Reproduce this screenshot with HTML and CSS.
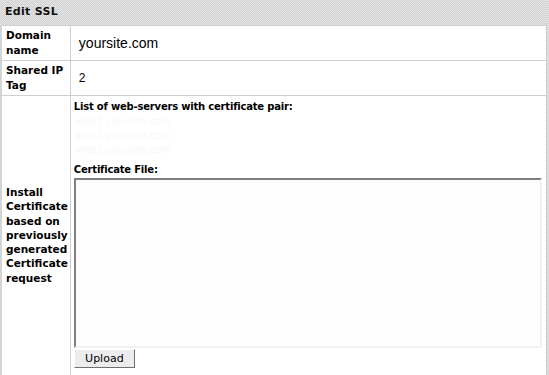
FILE: index.html
```html
<!DOCTYPE html>
<html lang="en">
<head>
    <meta charset="UTF-8">
    <title>Edit SSL</title>
    <link rel="stylesheet" href="styles.css">
</head>
<body>
    <div class="panel">
        <div class="panel-title">Edit SSL</div>
        <table class="ssl-table">
            <tr class="row-domain">
                <th>Domain name</th>
                <td><span class="domain">yoursite.com</span></td>
            </tr>
            <tr class="row-tag">
                <th>Shared IP Tag</th>
                <td>2</td>
            </tr>
            <tr class="row-install">
                <th>Install Certificate based on previously generated Certificate request</th>
                <td>
                    <div class="field-label">List of web-servers with certificate pair:</div>
                    <div class="server-list">
                        <div>web1.yoursite.com</div>
                        <div>web2.yoursite.com</div>
                        <div>web3.yoursite.com</div>
                    </div>
                    <div class="field-label">Certificate File:</div>
                    <textarea class="cert-file"></textarea>
                    <button type="button" class="upload">Upload</button>
                </td>
            </tr>
        </table>
    </div>
</body>
</html>
```
FILE: styles.css
```css
body {
    margin: 0;
    font-family: "DejaVu Sans", Verdana, sans-serif;
    font-size: 10px;
    color: #000;
    background-color: #dcdcdc;
    background-image: repeating-conic-gradient(#d2d2d2 0 25%, #e4e4e4 0 50%);
    background-size: 2px 2px;
    overflow: hidden;
}
.panel {
    width: 546px;
}
.panel-title {
    height: 25px;
    line-height: 24px;
    padding-left: 5px;
    font-weight: bold;
    font-size: 11px;
    letter-spacing: 0.3px;
    color: #111;
}
.ssl-table {
    width: 546px;
    border-collapse: collapse;
    background: #fff;
    border-left: 2px solid #d4d4d4;
    border-right: 1px solid #a8a8a8;
}
.ssl-table th,
.ssl-table td {
    border: 1px solid #cfcfcf;
    padding: 0;
}
.ssl-table th {
    width: 62px;
    padding: 0 2px 0 4px;
    text-align: left;
    font-weight: bold;
    font-size: 10.5px;
    line-height: 15px;
    letter-spacing: 0;
}
.ssl-table td {
    padding-left: 8px;
    font-family: "Liberation Sans", Arial, sans-serif;
    font-size: 12px;
}
.row-domain {
    height: 35px;
}
.row-tag {
    height: 35px;
}
.domain {
    font-size: 14px;
}
.row-install td {
    padding: 5px 4px 0 3px;
    vertical-align: top;
    font-family: "DejaVu Sans", Verdana, sans-serif;
    font-size: 10px;
}
.row-install th {
    vertical-align: top;
    padding-top: 89px;
    line-height: 14.3px;
}
.field-label {
    font-weight: bold;
    letter-spacing: -0.2px;
    height: 14px;
}
.server-list {
    color: #f8f8f8;
    line-height: 14px;
    padding: 0 2px 7px;
}
.cert-file {
    display: block;
    width: 468px;
    height: 170px;
    margin: 0;
    box-sizing: border-box;
    border: 2px solid;
    border-color: #808080 #f2f2f2 #f2f2f2 #808080;
    background: #fdfdfd;
    resize: none;
}
.upload {
    display: block;
    margin: 1px 0 8px;
    width: 61px;
    height: 19px;
    padding: 0;
    font-family: "DejaVu Sans", Verdana, sans-serif;
    font-size: 11px;
    background: #ececec;
    border: 1px solid;
    border-color: #fff #707070 #707070 #fff;
}
```
